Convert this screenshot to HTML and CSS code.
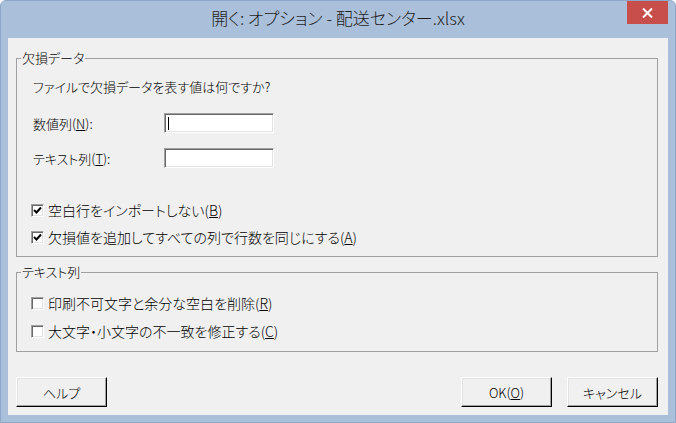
FILE: index.html
```html
<!DOCTYPE html>
<html lang="ja">
<head>
	<meta charset="UTF-8">
	<title>開く: オプション - 配送センター.xlsx</title>
	<link rel="stylesheet" href="styles.css">
</head>
<body>
	<div class="window">
		<div class="titlebar">
			<span class="title">開く: オプション - 配送センター.xlsx</span>
			<span class="close">
				<svg width="11" height="10" viewBox="0 0 11 10"><path d="M1 0.5 L10 9.5 M10 0.5 L1 9.5" stroke="#fff" stroke-width="2"/></svg>
			</span>
		</div>
		<div class="client">
			<fieldset class="group group_missing">
				<legend>欠損データ</legend>
				<p class="question">ファイルで欠損データを表す値は何ですか?</p>
				<div class="field_row">
					<label>数値列(<u>N</u>):</label>
					<div class="textbox"><span class="caret"></span></div>
				</div>
				<div class="field_row field_row2">
					<label>テキスト列(<u>T</u>):</label>
					<div class="textbox"></div>
				</div>
				<div class="check check_first">
					<span class="box"><svg width="9" height="9" viewBox="0 0 9 9"><path d="M1 4 L3.5 6.5 L8 1.5" stroke="#000" stroke-width="2" fill="none"/></svg></span>
					<span>空白行をインポートしない(<u>B</u>)</span>
				</div>
				<div class="check">
					<span class="box"><svg width="9" height="9" viewBox="0 0 9 9"><path d="M1 4 L3.5 6.5 L8 1.5" stroke="#000" stroke-width="2" fill="none"/></svg></span>
					<span>欠損値を追加してすべての列で行数を同じにする(<u>A</u>)</span>
				</div>
			</fieldset>
			<fieldset class="group group_text">
				<legend>テキスト列</legend>
				<div class="check check_first">
					<span class="box"></span>
					<span>印刷不可文字と余分な空白を削除(<u>R</u>)</span>
				</div>
				<div class="check">
					<span class="box"></span>
					<span>大文字・小文字の不一致を修正する(<u>C</u>)</span>
				</div>
			</fieldset>
			<div class="buttons">
				<button class="btn">ヘルプ</button>
				<div class="btn_group">
					<button class="btn">OK(<u>O</u>)</button>
					<button class="btn">キャンセル</button>
				</div>
			</div>
		</div>
	</div>
</body>
</html>
```

FILE: styles.css
```css
* {
	padding: 0;
	margin: 0;
	box-sizing: border-box;
}
body {
	font-family: "Noto Sans CJK JP", "Liberation Sans", sans-serif;
	font-feature-settings: "palt";
	font-size: 13px;
	font-weight: 300;
	color: #000;
	background: #fff;
}
.window {
	width: 676px;
	height: 423px;
	background: #aac0da;
	border: 1px solid #8ea7c6;
	border-radius: 6px 6px 0 0;
	display: flex;
	flex-direction: column;
}
.titlebar {
	height: 37px;
	position: relative;
	display: flex;
	justify-content: center;
	padding-top: 6px;
}
.title {
	font-size: 17px;
	line-height: 22px;
	color: #1e1e1e;
}
.close {
	position: absolute;
	top: 0;
	right: 7px;
	width: 41px;
	height: 23px;
	background: #c84e4b;
	display: flex;
	align-items: center;
	justify-content: center;
}
.client {
	flex: 1;
	margin: 0 7px 7px;
	background: #f0f0f0;
	padding: 13px 10px 0 8px;
	display: flex;
	flex-direction: column;
}
.group {
	border: 1px solid #a0a0a0;
	padding: 0 0 9px 4px;
	min-width: 0;
}
.group legend {
	font-size: 13px;
	line-height: 14px;
	padding: 0 1px;
}
.group_text {
	margin-top: 8px;
	padding-bottom: 10px;
}
.question {
	margin-top: 12px;
	padding-left: 12px;
	line-height: 20px;
}
.field_row {
	display: flex;
	align-items: center;
	height: 20px;
	margin-top: 16px;
}
.field_row2 {
	margin-top: 15px;
}
.field_row label {
	width: 143px;
	padding-left: 12px;
}
.textbox {
	width: 110px;
	height: 20px;
	background: #fff;
	border: 1px solid;
	border-color: #a0a0a0 #fff #fff #a0a0a0;
	box-shadow: inset 1px 1px #696969, inset -1px -1px #e3e3e3;
	padding: 3px 0 0 3px;
}
.caret {
	display: block;
	width: 1px;
	height: 13px;
	background: #000;
}
.check {
	display: flex;
	align-items: center;
	height: 20px;
	margin-top: 7px;
	margin-left: 10px;
	font-size: 14px;
}
.check_first {
	margin-top: 32px;
}
.group_text .check {
	margin-top: 8px;
}
.group_text .check_first {
	margin-top: 14px;
}
.box {
	width: 13px;
	height: 13px;
	background: #fff;
	border: 1px solid;
	border-color: #a0a0a0 #fff #fff #a0a0a0;
	box-shadow: inset 1px 1px #696969, inset -1px -1px #e3e3e3;
	display: flex;
	align-items: center;
	justify-content: center;
	margin-right: 4px;
}
.buttons {
	display: flex;
	justify-content: space-between;
	margin-top: 25px;
}
.btn_group {
	display: flex;
	gap: 15px;
}
.btn {
	width: 91px;
	height: 30px;
	font: inherit;
	font-size: 13px;
	background: #f0f0f0;
	border: 1px solid;
	border-color: #fff #000 #000 #fff;
	box-shadow: inset -1px -1px #a0a0a0, inset 1px 1px #e3e3e3;
	color: #000;
}
```
